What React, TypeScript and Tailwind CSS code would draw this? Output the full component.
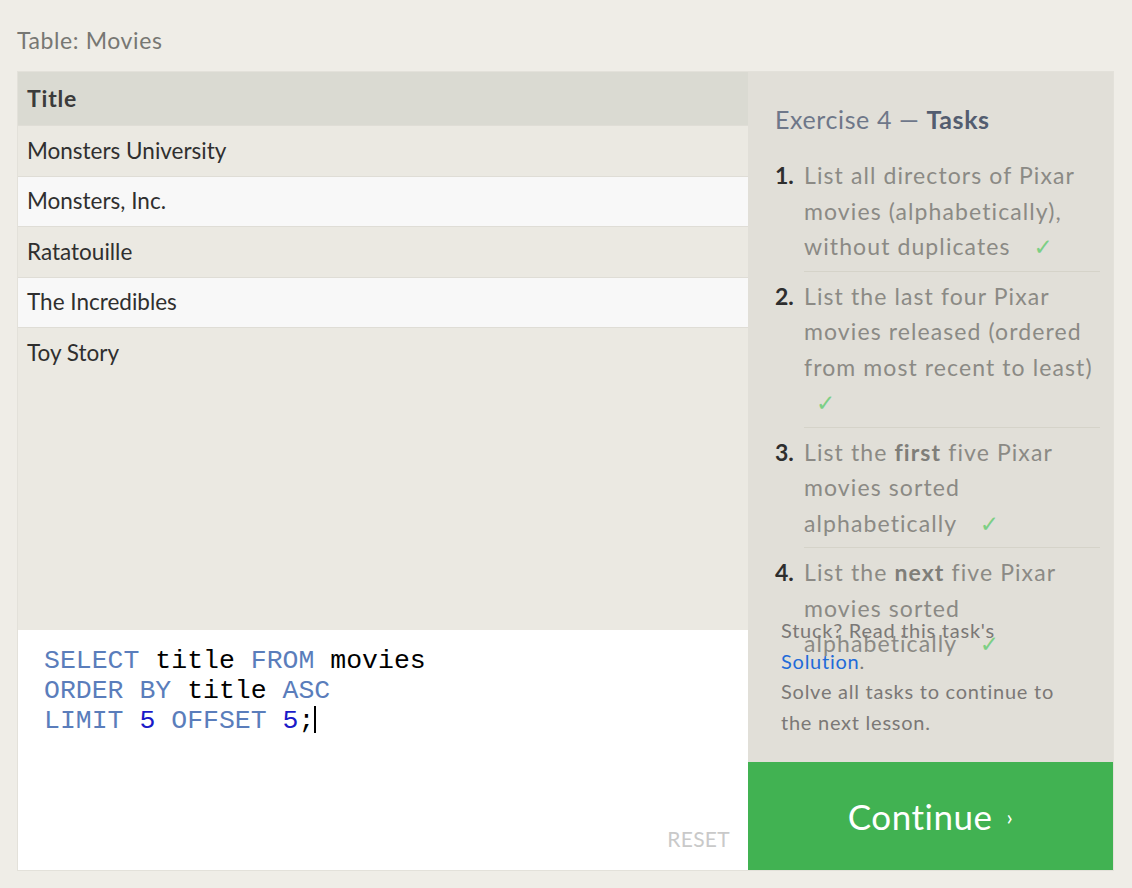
import { Fragment } from 'react'

const movies = ['Monsters University', 'Monsters, Inc.', 'Ratatouille', 'The Incredibles', 'Toy Story']

const Check = ({ className = '' }: { className?: string }) => (
  <span className={`text-[#7ccf85] font-['DejaVu_Sans',sans-serif] text-[23px] leading-none ${className}`}>✓</span>
)

type Task = { n: number; body: React.ReactNode }

const tasks: Task[] = [
  {
    n: 1,
    body: (
      <>
        List all directors of Pixar movies (alphabetically), without duplicates <Check className="ml-4" />
      </>
    ),
  },
  {
    n: 2,
    body: (
      <>
        List the last four Pixar movies released (ordered from most recent to least) <Check className="ml-3" />
      </>
    ),
  },
  {
    n: 3,
    body: (
      <>
        List the <b className="text-[#7f7e79]">first</b> five Pixar movies sorted alphabetically <Check className="ml-4" />
      </>
    ),
  },
  {
    n: 4,
    body: (
      <>
        List the <b className="text-[#7f7e79]">next</b> five Pixar movies sorted alphabetically <Check className="ml-4" />
      </>
    ),
  },
]

function MoviesTable() {
  return (
    <div className="flex-1 bg-[#ebe9e2]">
      <div className="h-[53px] bg-[#dadad2] px-[9px] flex items-center text-[23px] tracking-[0.8px] font-bold text-[#3b3b3b]">
        Title
      </div>
      {movies.map((m, i) => (
        <div
          key={m}
          className={`h-[50.5px] px-[9px] flex items-center text-[22.5px] text-[#2f2f2f] border-t border-[#dfddd6] ${
            i % 2 === 1 ? 'bg-[#f8f8f8]' : 'bg-[#ebe9e2]'
          }`}
        >
          {m}
        </div>
      ))}
    </div>
  )
}

function Editor() {
  const kw = 'text-[#5a7dbb]'
  const num = 'text-[#1a1ac8]'
  return (
    <div className="relative h-[240px] bg-white">
      <pre className="pt-[16px] pl-[26px] font-['Liberation_Mono',monospace] text-[26.5px] leading-[30px] text-black">
        <span className={kw}>SELECT</span> title <span className={kw}>FROM</span> movies
        {'\n'}
        <span className={kw}>ORDER BY</span> title <span className={kw}>ASC</span>
        {'\n'}
        <span className={kw}>LIMIT</span> <span className={num}>5</span> <span className={kw}>OFFSET</span>{' '}
        <span className={num}>5</span>;<span className="inline-block w-[2px] h-[27px] bg-black align-[-5px]" />
      </pre>
      <span className="absolute right-[18px] bottom-[16px] text-[21px] tracking-[0.3px] text-[#c9c9c9]">RESET</span>
    </div>
  )
}

function TaskPanel() {
  return (
    <div className="w-[365px] flex flex-col bg-[#e1dfd8]">
      <div className="relative flex-1">
        <div className="pl-[27px] pr-[13px] pt-[30px]">
          <h2 className="text-[25px] tracking-[0.6px] leading-[34px] text-[#6e7789]">
            Exercise 4 — <span className="font-bold text-[#535d70]">Tasks</span>
          </h2>
          <ol className="mt-[18px]">
            {tasks.map((t, i) => (
              <Fragment key={t.n}>
                {i > 0 && <li className="ml-[29px] h-px bg-[#d5d3c9] mt-[2px] mb-[3px]" aria-hidden />}
                <li className="flex text-[23px] tracking-[1.1px] leading-[35.5px] pt-[4px] pb-[4px]">
                  <span className="w-[29px] shrink-0 font-bold tracking-normal text-[#2e2e2e]">{t.n}.</span>
                  <span className="text-[#8b8a85]">{t.body}</span>
                </li>
              </Fragment>
            ))}
          </ol>
        </div>
        <div className="absolute left-[33px] right-[30px] top-[543px] text-[20px] tracking-[0.75px] leading-[30.5px] text-[#7b7876]">
          <p>
            Stuck? Read this task's
            <br />
            <span className="text-[#1f6bd8]">Solution</span>.
          </p>
          <p>Solve all tasks to continue to the next lesson.</p>
        </div>
      </div>
      <button className="h-[108px] bg-[#41b252] flex items-center justify-center text-white text-[35px] tracking-[0.5px]">
        Continue<span className="ml-[14px] text-[22px]">›</span>
      </button>
    </div>
  )
}

export default function App() {
  return (
    <div className="min-h-[888px] bg-[#efede7] font-['Lato',sans-serif] pl-[17px] pr-[18px]">
      <div className="h-[71px] flex items-center pt-[10px] text-[23px] tracking-[0.6px] text-[#777773]">Table: Movies</div>
      <div className="flex h-[800px] border border-[#e3e1da]">
        <div className="flex-1 flex flex-col">
          <MoviesTable />
          <Editor />
        </div>
        <TaskPanel />
      </div>
    </div>
  )
}
